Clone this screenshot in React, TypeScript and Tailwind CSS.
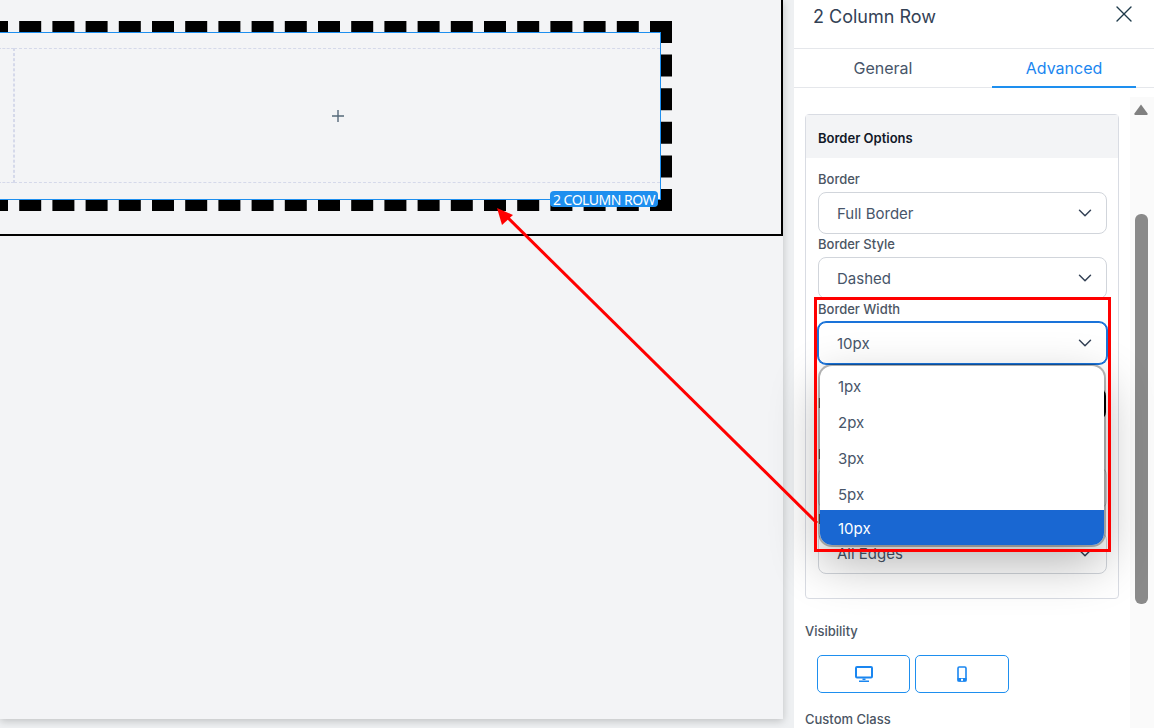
import { ChevronDown, X } from "lucide-react";

const Field = ({ label, value, focused }: { label: string; value: string; focused?: boolean }) => (
  <div className="mt-px">
    <div className="h-[18px] mb-1 text-[13px] leading-[18px] font-medium text-[#4b5563]">{label}</div>
    <div
      className={
        focused
          ? "h-[42px] flex items-center justify-between pl-[18px] pr-[10px] pt-[3px] bg-white rounded-lg border border-[#1a73d9] ring-1 ring-[#1a73d9] text-[15px] text-[#475569]"
          : "h-[42px] flex items-center justify-between pl-[18px] pr-[10px] pt-[3px] bg-white rounded-lg border border-[#d1d5db] text-[15px] text-[#475569]"
      }
    >
      {value}
      <ChevronDown size={22} strokeWidth={1.6} className="text-[#334155] -mt-[3px]" />
    </div>
  </div>
);

const options = ["1px", "2px", "3px", "5px"];

export default function App() {
  return (
    <div className="relative w-[1154px] h-[728px] overflow-hidden flex items-start bg-[#eef0f2] font-['Inter',sans-serif]">
      {/* canvas */}
      <div className="w-[783px] h-[719px] shrink-0 bg-[#f3f4f6] shadow-[0_2px_8px_rgba(0,0,0,0.2)]">
        <div className="h-[236px] pt-[21px] overflow-hidden border-r-2 border-b-2 border-black">
          <div className="relative -ml-[14px] w-[686px] h-[190px] border-[11px] border-dashed border-black">
            <div className="h-full flex pt-[15px] pb-4 border border-[#1e8fef]">
              <div className="w-[16px] border-y border-r border-dashed border-[#d5d9ea]" />
              <div className="flex-1 flex items-center justify-center border-y border-l border-dashed border-[#d5d9ea]">
                <svg width="12" height="12" viewBox="0 0 12 12" className="text-[#56697a]">
                  <path d="M6 0v12M0 6h12" stroke="currentColor" strokeWidth="1.4" />
                </svg>
              </div>
            </div>
            <div className="absolute right-[3px] -bottom-[7px] h-4 w-[108px] pt-px flex items-center justify-center rounded-sm bg-[#1e8fef] text-white text-[14px] leading-4 tracking-[-0.5px] font-['Noto_Sans',sans-serif]">
              2 COLUMN ROW
            </div>
          </div>
        </div>
      </div>

      {/* settings panel */}
      <div className="ml-[11px] w-[360px] h-[728px] shrink-0 bg-white flex flex-col">
        <div className="h-[49px] shrink-0 flex justify-between pl-[19px] pr-4 pt-[5px] border-b border-[#e5e7eb]">
          <span className="text-[18px] leading-6 text-[#334155]">2 Column Row</span>
          <X size={28} strokeWidth={1.2} className="text-[#1e3a4a] -mt-[5px]" />
        </div>
        <div className="h-[39px] shrink-0 flex border-b border-[#e5e7eb] text-[16px]">
          <div className="w-[178px] flex items-center justify-center text-[#475569]">General</div>
          <div className="ml-5 -mb-px w-[144px] pt-px flex items-center justify-center border-b-2 border-[#1e8fef] text-[#1a86f0]">
            Advanced
          </div>
        </div>
        <div className="flex-1 min-h-0 flex">
          <div className="w-[336px] pl-[11px] pt-[26px]">
            <div className="w-[314px] h-[485px] border border-[#d9dce3] rounded-sm">
              <div className="h-[43px] flex items-center px-3 pt-1 bg-[#f3f4f6] text-[13px] font-semibold text-[#111827]">
                Border Options
              </div>
              <div className="pl-3 pr-[11px] pt-[11px]">
                <Field label="Border" value="Full Border" />
                <Field label="Border Style" value="Dashed" />
                <div className="relative">
                  <Field label="Border Width" value="10px" focused />
                  <div className="absolute z-10 left-[2px] right-[3px] top-[66px] h-[179px] overflow-hidden rounded-xl bg-white shadow-[0_0_0_2px_rgba(0,0,0,0.28),0_18px_50px_rgba(0,0,0,0.3)] text-[15px] text-[#475569]">
                    {options.map((o) => (
                      <div key={o} className="h-9 flex items-center pl-[18px] pt-[7px]">
                        {o}
                      </div>
                    ))}
                    <div className="h-[35px] flex items-center pl-[18px] pt-1 bg-[#1967d2] text-white">10px</div>
                  </div>
                </div>
                <div className="mt-6 h-8 flex justify-between items-center text-[13px] font-medium text-[#4b5563]">
                  Border Color
                  <div className="w-8 h-8 mr-px rounded-lg bg-black" />
                </div>
                <div className="mt-[25px]">
                  <Field label="Border Radius" value="None" />
                </div>
                <Field label="Border Edges" value="All Edges" />
              </div>
            </div>
            <div className="mt-[23px] h-[18px] text-[13px] leading-[18px] font-medium text-[#4b5563]">Visibility</div>
            <div className="mt-[15px] pl-3 flex gap-[5px]">
              <div className="w-[93px] h-[38px] flex items-center justify-center rounded-[5px] border border-[#1e8fef]">
                <svg width="18" height="16" viewBox="0 0 18 16" fill="none" className="text-[#1a86f0]">
                  <rect x="1" y="1" width="16" height="10.5" rx="1" stroke="currentColor" strokeWidth="2" />
                  <path d="M7.500 12.500h3v1.500H7.500zM4 14.500h10V16H4z" fill="currentColor" />
                </svg>
              </div>
              <div className="w-[94px] h-[38px] flex items-center justify-center rounded-[5px] border border-[#1e8fef]">
                <svg width="10" height="16" viewBox="0 0 10 16" fill="none" className="text-[#1a86f0]">
                  <rect x="1" y="1" width="8" height="14" rx="1.2" stroke="currentColor" strokeWidth="1.6" />
                  <path d="M0.500 12h9v3.500h-9z" fill="currentColor" />
                  <rect x="4" y="12.800" width="2" height="2" fill="#fff" />
                </svg>
              </div>
            </div>
            <div className="mt-[17px] h-[18px] text-[13px] leading-[18px] font-medium text-[#4b5563]">Custom Class</div>
          </div>
          <div className="flex-1 mt-[9px] bg-[#fafafa] flex flex-col pl-[4px]">
            <svg width="14" height="11" viewBox="0 0 14 11" className="mt-[7px] text-[#808080]">
              <path d="M7 .5 13.600 9.600c.3.500 0 1.400-.8 1.400H1.200C.4 11 .1 10.100.4 9.600z" fill="currentColor" />
            </svg>
            <div className="ml-px mt-[99px] w-[13px] h-[390px] rounded-md bg-[#8a8a8a]" />
          </div>
        </div>
      </div>

      {/* annotation */}
      <div className="absolute z-20 left-[814px] top-[297px] w-[297px] h-[255px] border-[3px] border-[#ff0000]" />
      <svg width="1154" height="728" className="absolute z-20 left-0 top-0 pointer-events-none">
        <path d="M817 523 506 216" stroke="#ff0000" strokeWidth="3" fill="none" />
        <path d="M497 208 513 215 502 225z" fill="#ff0000" />
      </svg>
    </div>
  );
}
